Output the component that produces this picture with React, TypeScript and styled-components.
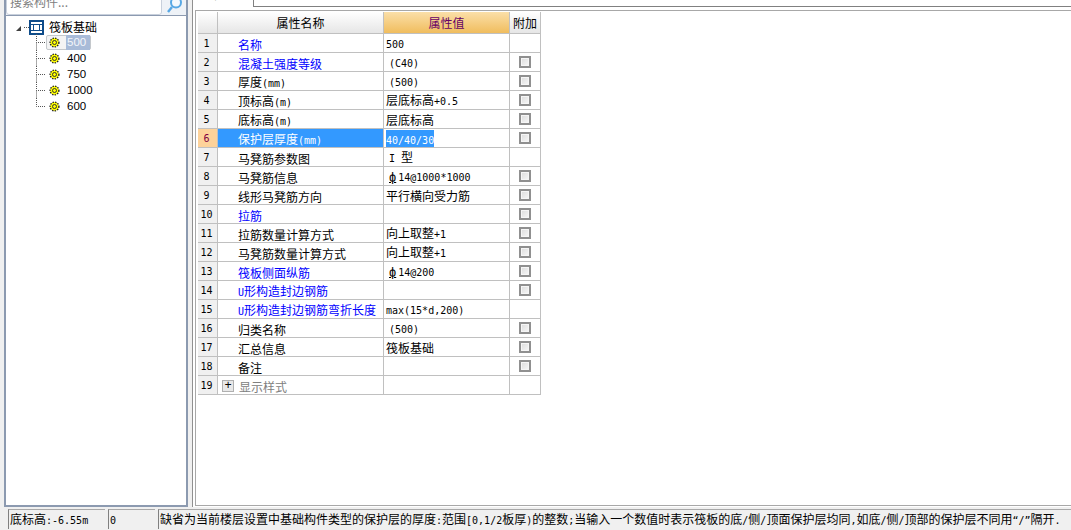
/**
 * App.tsx
 * Raft foundation property editor: component tree, property grid and status bar
 */

import React from 'react';
import styled, { createGlobalStyle } from 'styled-components';

const GlobalStyle = createGlobalStyle`
  html, body {
    margin: 0;
    padding: 0;
    background: #f0f0f0;
  }
`;

const CJK = `"Noto Sans CJK SC", "Liberation Sans", sans-serif`;

// Layout

const Page = styled.div`
  width: 1071px;
  height: 530px;
  overflow: hidden;
  display: flex;
  flex-direction: column;
  background: #f0f0f0;
  font-family: ${CJK};
  font-size: 12px;
  color: #000;
`;

const Main = styled.div`
  height: 508px;
  display: flex;
  padding-left: 4px;
  gap: 4px;
`;

// Left panel

const LeftPanel = styled.div`
  width: 184px;
  display: flex;
  flex-direction: column;
  border-left: 2px solid #8c9ab0;
  border-right: 2px solid #8c9ab0;
  border-bottom: 2px solid #8c9ab0;
  box-sizing: border-box;
  height: 507px;
  background: #fff;
`;

const SearchBar = styled.div`
  height: 15px;
  flex: none;
  display: flex;
  align-items: flex-end;
  overflow: hidden;
  background: #eef2f7;
  border-bottom: 1px solid #8c9ab0;
`;

const SearchInput = styled.div`
  width: 156px;
  height: 26px;
  flex: none;
  box-sizing: border-box;
  padding: 3px 0 0 3px;
  background: #fff;
  color: #808080;
  line-height: 18px;
  border: 1px solid #c8d0dc;
  border-radius: 3px;
`;

const SearchIcon = styled.svg`
  width: 20px;
  height: 15px;
  margin-left: 3px;
  flex: none;
`;

const Tree = styled.div`
  flex: 1;
  padding-top: 3px;
`;

const TreeRow = styled.div<{ $root?: boolean }>`
  height: ${p => (p.$root ? '15px' : '16px')};
  display: flex;
  align-items: center;
  line-height: 16px;
`;

const TreeRootLabel = styled.span`
  margin-left: 5px;
  white-space: nowrap;
`;

const TreeConnector = styled.svg`
  flex: none;
  width: 40px;
  height: 16px;
`;

const TreeChildIcon = styled.svg`
  flex: none;
  width: 11px;
  height: 11px;
  margin: 0 6px 0 2px;
`;

const TreeChild = styled.div<{ $selected?: boolean }>`
  height: 15px;
  display: flex;
  align-items: center;
  box-sizing: border-box;
  border-radius: 2px;
  border: 1px solid ${p => (p.$selected ? '#c4c8cc' : 'transparent')};
  background: ${p => (p.$selected ? '#f4f4f4' : 'transparent')};
`;

const TreeChildLabel = styled.span<{ $selected?: boolean }>`
  font-family: "Liberation Sans", sans-serif;
  font-size: 11.5px;
  padding: 0 1px;
  min-width: 22px;
  line-height: 15px;
  background: ${p => (p.$selected ? '#a8bbd8' : 'transparent')};
  color: ${p => (p.$selected ? '#f4f6fa' : '#000')};
`;

// Right panel

const RightPanel = styled.div`
  flex: 1;
  min-width: 0;
  display: flex;
  flex-direction: column;
  border-left: 1px solid #909090;
  background: #fff;
  height: 507px;
`;

const TabStrip = styled.div`
  height: 7px;
  flex: none;
  display: flex;
  align-items: flex-end;
  overflow: hidden;
  background: #fff;
  margin-bottom: 3px;
`;

const ActiveTab = styled.div`
  width: 61px;
  height: 20px;
  flex: none;
  box-sizing: border-box;
  padding-left: 8px;
  line-height: 14px;
  color: #000;
  border-right: 1px solid #808080;
`;

const TabRule = styled.div`
  flex: 1;
  height: 1px;
  background: #808080;
  align-self: flex-end;
`;

const EditorBox = styled.div`
  flex: 1;
  margin-left: 2px;
  border-top: 1px solid #a8a8a8;
  border-left: 1px solid #a8a8a8;
  border-bottom: 1px solid #a8a8a8;
  padding: 1px 0 0 1px;
  margin-bottom: 1px;
`;

const Grid = styled.div`
  display: grid;
  grid-template-columns: 20px 166px 126px 31px;
  grid-template-rows: 22px;
  grid-auto-rows: 19px;
  width: 343px;
  margin-left: 1px;
`;

const Cell = styled.div`
  box-sizing: border-box;
  border-right: 1px solid #c0c0c0;
  border-bottom: 1px solid #c0c0c0;
  display: flex;
  align-items: center;
  line-height: 18px;
  white-space: nowrap;
  overflow: hidden;
  background: #fff;
`;

const HeadCell = styled(Cell)<{ $active?: boolean }>`
  justify-content: center;
  font-size: 12px;
  background: ${p =>
    p.$active
      ? 'linear-gradient(#fbdfa8, #f0bd5e)'
      : 'linear-gradient(#ffffff, #e6e6e6)'};
  color: ${p => (p.$active ? '#660066' : '#000')};
`;

const NumCell = styled(Cell)<{ $active?: boolean }>`
  justify-content: center;
  padding: 1px 2px 0 0;
  background: ${p => (p.$active ? '#fdd29a' : '#f0f0f0')};
  color: ${p => (p.$active ? '#800040' : '#000')};
`;

const NameCell = styled(Cell)<{ $active?: boolean; $tone?: 'link' | 'muted' }>`
  padding: 3px 0 0 20px;
  background: ${p => (p.$active ? '#3399ff' : '#fff')};
  color: ${p =>
    p.$active
      ? '#fff'
      : p.$tone === 'link'
      ? '#0000ff'
      : p.$tone === 'muted'
      ? '#808080'
      : '#000'};
`;

const ValueCell = styled(Cell)<{ $indent?: boolean }>`
  padding-top: 1px;
  padding-left: ${p => (p.$indent ? '5px' : '2px')};
`;

const ExtraCell = styled(Cell)`
  justify-content: center;
`;

const Selection = styled.span`
  background: #3399ff;
  color: #fff;
  line-height: 14px;
`;

const Latin = styled.span`
  font-family: "DejaVu Sans Mono", "Liberation Mono", monospace;
  font-size: 10px;
`;

const RebarMark = styled(Latin)`
  font-size: 12px;
  text-decoration: underline;
  margin-right: 2px;
`;

const Checkbox = styled.span`
  width: 12px;
  height: 12px;
  box-sizing: border-box;
  border: 2px solid #909090;
  background: linear-gradient(135deg, #dcdcdc, #f8f8f8);
  box-shadow: inset 0 0 0 1px #f6f6f6;
`;

const Expander = styled.span`
  width: 12px;
  height: 12px;
  box-sizing: border-box;
  margin: -2px 5px 0 -16px;
  flex: none;
  border: 1px solid #b0b0b0;
  background: #e8e8e8;
  display: flex;
  align-items: center;
  justify-content: center;
  font-family: "Liberation Mono", monospace;
  font-size: 12px;
  line-height: 10px;
  color: #000;
`;

// Status bar

const StatusBar = styled.div`
  flex: 1;
  margin-top: 1px;
  display: flex;
  gap: 3px;
  padding-left: 8px;
`;

const StatusCell = styled.div<{ $width?: number }>`
  ${p => (p.$width ? `width: ${p.$width}px; flex: none;` : 'flex: 1; min-width: 0;')}
  box-sizing: border-box;
  height: 20px;
  padding-left: 1px;
  border-left: 1px solid #808080;
  border-top: 1px solid #a8a8a8;
  line-height: 18px;
  white-space: nowrap;
  overflow: hidden;
`;

// Data

type Row = {
  name: string;
  value?: string;
  indent?: boolean;
  rebar?: boolean;
  tone?: 'link' | 'muted';
  check?: boolean;
};

const rows: Row[] = [
  { name: '名称', value: '500', tone: 'link' },
  { name: '混凝土强度等级', value: '(C40)', indent: true, tone: 'link', check: true },
  { name: '厚度(mm)', value: '(500)', indent: true, check: true },
  { name: '顶标高(m)', value: '层底标高+0.5', check: true },
  { name: '底标高(m)', value: '层底标高', check: true },
  { name: '保护层厚度(mm)', value: '40/40/30', check: true },
  { name: '马凳筋参数图', value: 'I 型', indent: true },
  { name: '马凳筋信息', value: '14@1000*1000', rebar: true, indent: true, check: true },
  { name: '线形马凳筋方向', value: '平行横向受力筋', check: true },
  { name: '拉筋', tone: 'link', check: true },
  { name: '拉筋数量计算方式', value: '向上取整+1', check: true },
  { name: '马凳筋数量计算方式', value: '向上取整+1', check: true },
  { name: '筏板侧面纵筋', value: '14@200', rebar: true, indent: true, tone: 'link', check: true },
  { name: 'U形构造封边钢筋', tone: 'link', check: true },
  { name: 'U形构造封边钢筋弯折长度', value: 'max(15*d,200)', tone: 'link' },
  { name: '归类名称', value: '(500)', indent: true, check: true },
  { name: '汇总信息', value: '筏板基础', check: true },
  { name: '备注', check: true },
  { name: '显示样式', tone: 'muted' },
];

const treeItems = ['500', '400', '750', '1000', '600'];

const statusText =
  '缺省为当前楼层设置中基础构件类型的保护层的厚度:范围[0,1/2板厚)的整数;当输入一个数值时表示筏板的底/侧/顶面保护层均同,如底/侧/顶部的保护层不同用“/”隔开.';

// Half-width latin runs sit next to 12px CJK, as in the original bitmap font
const Mixed: React.FC<{ text: string }> = ({ text }) => (
  <span>
    {text.split(/([\x20-\x7e“”]+)/).map((part, i) =>
      /^[\x20-\x7e“”]+$/.test(part) ? <Latin key={i}>{part}</Latin> : part
    )}
  </span>
);

const GearIcon: React.FC = () => (
  <TreeChildIcon viewBox="0 0 11 11">
    <circle cx="5.5" cy="5.5" r="4.4" fill="#ffff00" stroke="#222" strokeWidth="1.4" strokeDasharray="1.4 1.2" />
    <circle cx="5.5" cy="5.5" r="2" fill="#ffff00" stroke="#333" strokeWidth="1" />
  </TreeChildIcon>
);

const App: React.FC = () => (
  <Page>
    <GlobalStyle />
    <Main>
      <LeftPanel>
        <SearchBar>
          <SearchInput>搜索构件...</SearchInput>
          <SearchIcon viewBox="0 0 20 15">
            <circle cx="11" cy="2.5" r="5" fill="#f4f9fd" stroke="#58a8e4" strokeWidth="2" />
            <line x1="7" y1="7" x2="3" y2="12" stroke="#58a8e4" strokeWidth="2.4" />
          </SearchIcon>
        </SearchBar>
        <Tree>
          <TreeRow $root>
            <svg width="38" height="16" viewBox="0 0 38 16">
              <path d="M10 12 L15 12 L15 7 Z" fill="#404040" />
              <path d="M18 8.5 H23" stroke="#555" strokeDasharray="1 1" />
              <rect x="24" y="2" width="13" height="13" fill="#fff" stroke="#0f4c8a" strokeWidth="2" />
              <rect x="27.5" y="5.5" width="6" height="6" fill="#fff" stroke="#0f4c8a" />
              <path d="M24 5.5 H37 M24 11.5 H37" stroke="#0f4c8a" />
            </svg>
            <TreeRootLabel>筏板基础</TreeRootLabel>
          </TreeRow>
          {treeItems.map((item, i) => (
            <TreeRow key={item}>
              <TreeConnector viewBox="0 0 40 16">
                <path
                  d={`M30.5 ${i === 0 ? -2 : 0} V8.5 H40 ${i < treeItems.length - 1 ? 'M30.5 8.5 V16' : ''}`}
                  fill="none"
                  stroke="#555"
                  strokeDasharray="1 1"
                />
              </TreeConnector>
              <TreeChild $selected={i === 0}>
                <GearIcon />
                <TreeChildLabel $selected={i === 0}>{item}</TreeChildLabel>
              </TreeChild>
            </TreeRow>
          ))}
        </Tree>
      </LeftPanel>

      <RightPanel>
        <TabStrip>
          <ActiveTab>属性编辑</ActiveTab>
          <TabRule />
        </TabStrip>
        <EditorBox>
          <Grid>
            <HeadCell />
            <HeadCell>属性名称</HeadCell>
            <HeadCell $active>属性值</HeadCell>
            <HeadCell>附加</HeadCell>
            {rows.map((row, i) => {
              const active = i === 5;
              return (
                <React.Fragment key={row.name}>
                  <NumCell $active={active}>
                    <Latin>{i + 1}</Latin>
                  </NumCell>
                  <NameCell $active={active} $tone={row.tone}>
                    {i === 18 && <Expander>+</Expander>}
                    <Mixed text={row.name} />
                  </NameCell>
                  <ValueCell $indent={row.indent}>
                    <span>
                      {row.rebar && <RebarMark>ф</RebarMark>}
                      {active ? (
                        <Selection>
                          <Mixed text={row.value ?? ''} />
                        </Selection>
                      ) : (
                        <Mixed text={row.value ?? ''} />
                      )}
                    </span>
                  </ValueCell>
                  <ExtraCell>{row.check && <Checkbox />}</ExtraCell>
                </React.Fragment>
              );
            })}
          </Grid>
        </EditorBox>
      </RightPanel>
    </Main>

    <StatusBar>
      <StatusCell $width={97}>
        <Mixed text="底标高:-6.55m" />
      </StatusCell>
      <StatusCell $width={47}>
        <Latin>0</Latin>
      </StatusCell>
      <StatusCell>
        <Mixed text={statusText} />
      </StatusCell>
    </StatusBar>
  </Page>
);

export default App;
